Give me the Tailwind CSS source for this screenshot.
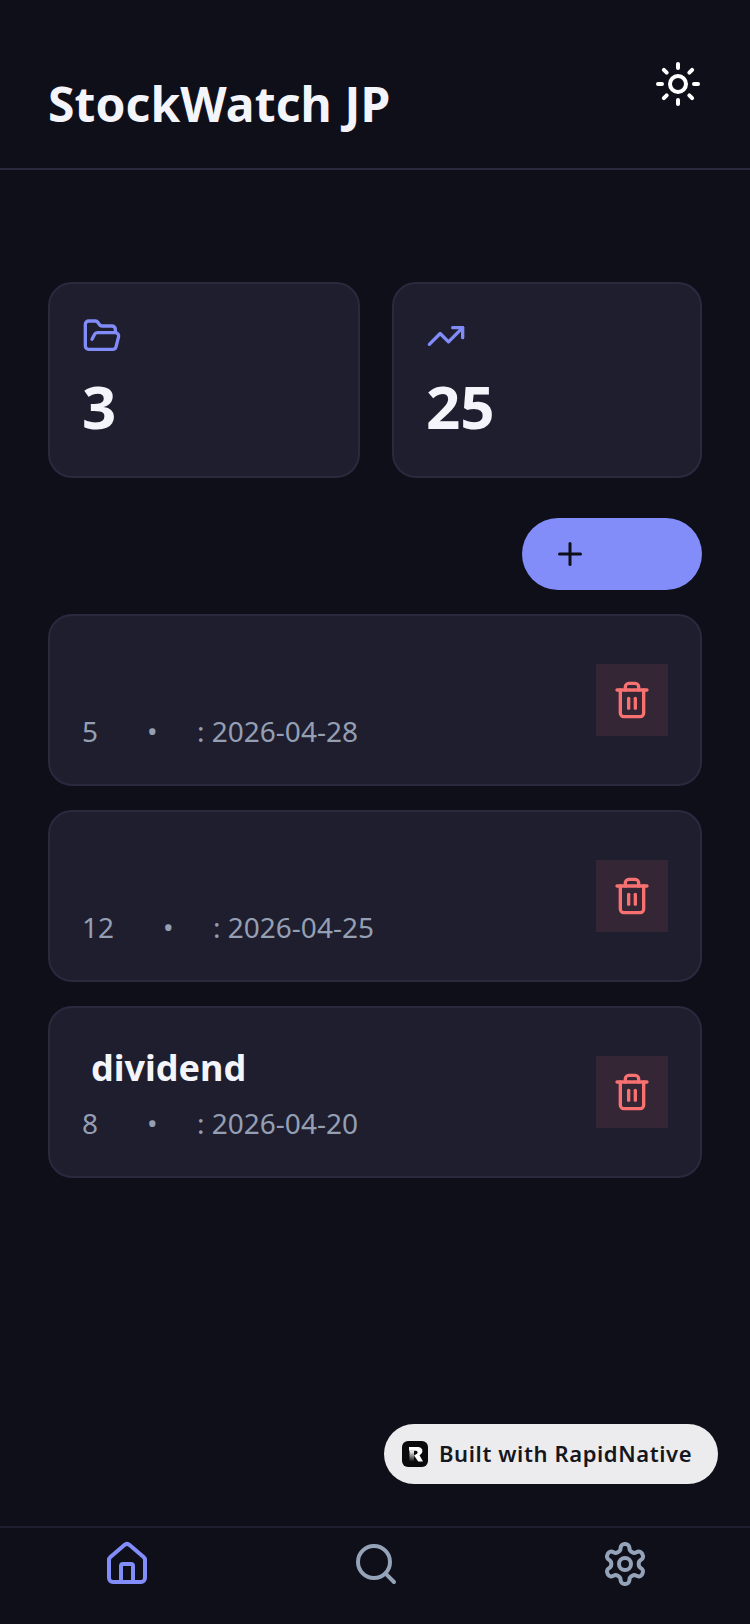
<!DOCTYPE html>
<html lang="en">
<head>
  <meta charset="UTF-8" />
  <meta name="viewport" content="width=device-width, initial-scale=1.0"/>
  <title>StockWatch JP</title>
  <script src="https://cdn.jsdelivr.net/npm/@tailwindcss/browser@4"></script>
</head>
<body class="bg-[#0f0f1a] font-['Noto_Sans',sans-serif]">
  <div class="relative flex flex-col h-[1624px] w-[750px] overflow-hidden">

    <!-- Header -->
    <header class="h-[170px] flex justify-between px-12 border-b-2 border-[#2a2a3e]">
      <h1 class="mt-[70px] text-[48px] leading-[68px] font-bold text-[#f4f5fb] tracking-[0.1px]">StockWatch JP</h1>
      <button class="mt-[60px] h-[48px] text-white" aria-label="Theme">
        <svg width="48" height="48" viewBox="0 0 24 24" fill="none" stroke="currentColor" stroke-width="2" stroke-linecap="round" stroke-linejoin="round"><circle cx="12" cy="12" r="4"/><path d="M12 2v2"/><path d="M12 20v2"/><path d="m4.93 4.93 1.41 1.41"/><path d="m17.66 17.66 1.41 1.41"/><path d="M2 12h2"/><path d="M20 12h2"/><path d="m6.34 17.66-1.41 1.41"/><path d="m19.07 4.93-1.41 1.41"/></svg>
      </button>
    </header>

    <main class="flex-1 px-12 pt-28">
      <!-- Stats -->
      <div class="grid grid-cols-[312px_310px] gap-8">
        <div class="h-[196px] rounded-3xl bg-[#1e1e2e] border-2 border-[#2a2a3e] px-8 pt-[32px]">
          <svg width="40" height="40" viewBox="0 0 24 24" fill="none" stroke="#818cf8" stroke-width="2" stroke-linecap="round" stroke-linejoin="round"><path d="m6 14 1.5-2.9A2 2 0 0 1 9.24 10H20a2 2 0 0 1 1.94 2.5l-1.54 6a2 2 0 0 1-1.95 1.5H4a2 2 0 0 1-2-2V5a2 2 0 0 1 2-2h3.9a2 2 0 0 1 1.69.9l.81 1.2a2 2 0 0 0 1.67.9H18a2 2 0 0 1 2 2v2"/></svg>
          <div class="text-[60px] leading-[76px] font-bold text-[#f4f5fb] mt-3">3</div>
        </div>
        <div class="h-[196px] rounded-3xl bg-[#1e1e2e] border-2 border-[#2a2a3e] px-8 pt-[32px]">
          <svg width="40" height="40" viewBox="0 0 24 24" fill="none" stroke="#818cf8" stroke-width="2" stroke-linecap="round" stroke-linejoin="round"><path d="M16 7h6v6"/><path d="m22 7-8.5 8.5-5-5L2 17"/></svg>
          <div class="text-[60px] leading-[76px] font-bold text-[#f4f5fb] mt-3">25</div>
        </div>
      </div>

      <!-- Add button -->
      <div class="flex justify-end mt-10">
        <button class="w-[180px] h-[72px] rounded-full bg-[#838dfa] flex items-center pl-[30px] text-[#0f0f1a]" aria-label="Add">
          <svg width="36" height="36" viewBox="0 0 24 24" fill="none" stroke="currentColor" stroke-width="2" stroke-linecap="round" stroke-linejoin="round"><path d="M5 12h14"/><path d="M12 5v14"/></svg>
        </button>
      </div>

      <!-- List -->
      <div class="flex flex-col gap-6 mt-6">
        <div class="h-[172px] rounded-3xl bg-[#1e1e2e] border-2 border-[#2a2a3e] pl-8 pr-8 flex items-center justify-between">
          <div class="pt-[12px]">
            <div class="h-[50px]"></div>
            <p class="text-[28px] leading-[40px] text-[#959fb3] flex"><span class="w-[65px]">5</span><span class="w-[50px]">•</span><span>: 2026-04-28</span></p>
          </div>
          <button class="w-[72px] h-[72px] bg-[#342635] flex items-center justify-center text-[#f87171]" aria-label="Delete">
            <svg width="40" height="40" viewBox="0 0 24 24" fill="none" stroke="currentColor" stroke-width="2" stroke-linecap="round" stroke-linejoin="round"><path d="M3 6h18"/><path d="M19 6v14c0 1-1 2-2 2H7c-1 0-2-1-2-2V6"/><path d="M8 6V4c0-1 1-2 2-2h4c1 0 2 1 2 2v2"/><line x1="10" x2="10" y1="11" y2="17"/><line x1="14" x2="14" y1="11" y2="17"/></svg>
          </button>
        </div>
        <div class="h-[172px] rounded-3xl bg-[#1e1e2e] border-2 border-[#2a2a3e] pl-8 pr-8 flex items-center justify-between">
          <div class="pt-[12px]">
            <div class="h-[50px]"></div>
            <p class="text-[28px] leading-[40px] text-[#959fb3] flex"><span class="w-[81px]">12</span><span class="w-[50px]">•</span><span>: 2026-04-25</span></p>
          </div>
          <button class="w-[72px] h-[72px] bg-[#342635] flex items-center justify-center text-[#f87171]" aria-label="Delete">
            <svg width="40" height="40" viewBox="0 0 24 24" fill="none" stroke="currentColor" stroke-width="2" stroke-linecap="round" stroke-linejoin="round"><path d="M3 6h18"/><path d="M19 6v14c0 1-1 2-2 2H7c-1 0-2-1-2-2V6"/><path d="M8 6V4c0-1 1-2 2-2h4c1 0 2 1 2 2v2"/><line x1="10" x2="10" y1="11" y2="17"/><line x1="14" x2="14" y1="11" y2="17"/></svg>
          </button>
        </div>
        <div class="h-[172px] rounded-3xl bg-[#1e1e2e] border-2 border-[#2a2a3e] pl-8 pr-8 flex items-center justify-between">
          <div class="pt-[12px]">
            <div class="mb-[20px] pl-[9px] text-[36px] leading-[30px] font-bold text-[#f4f5fb]">dividend</div>
            <p class="text-[28px] leading-[40px] text-[#959fb3] flex"><span class="w-[65px]">8</span><span class="w-[50px]">•</span><span>: 2026-04-20</span></p>
          </div>
          <button class="w-[72px] h-[72px] bg-[#342635] flex items-center justify-center text-[#f87171]" aria-label="Delete">
            <svg width="40" height="40" viewBox="0 0 24 24" fill="none" stroke="currentColor" stroke-width="2" stroke-linecap="round" stroke-linejoin="round"><path d="M3 6h18"/><path d="M19 6v14c0 1-1 2-2 2H7c-1 0-2-1-2-2V6"/><path d="M8 6V4c0-1 1-2 2-2h4c1 0 2 1 2 2v2"/><line x1="10" x2="10" y1="11" y2="17"/><line x1="14" x2="14" y1="11" y2="17"/></svg>
          </button>
        </div>
      </div>
    </main>

    <!-- Badge -->
    <div class="absolute left-[384px] top-[1424px] w-[334px] h-[60px] rounded-full bg-[#ececee] flex items-center pl-[18px] gap-[11px]">
      <svg width="26" height="26" viewBox="0 0 26 26">
        <defs><linearGradient id="stem" x1="0" y1="0" x2="0" y2="1"><stop offset="0" stop-color="#fff"/><stop offset="1" stop-color="#0b0b0d"/></linearGradient></defs>
        <rect width="26" height="26" rx="6" fill="#0b0b0d"/>
        <path d="M7 6h9.500a4 4 0 0 1 2.600 7l-1.600 1.200L21 20.500h-4.800L12 14.500l3-1.800a1.700 1.700 0 0 0-.8-3H7z" fill="#fff"/>
        <rect x="7.500" y="9.700" width="4.500" height="11" fill="url(#stem)"/>
      </svg>
      <span class="text-[22px] font-semibold text-[#16171c] tracking-[0.6px] -mt-[1px]">Built with RapidNative</span>
    </div>

    <!-- Bottom nav -->
    <nav class="h-[98px] border-t-2 border-[#1e1e2e] flex justify-around items-start pt-[12px] pl-[2px]">
      <svg width="48" height="48" viewBox="0 0 24 24" fill="none" stroke="#838dfa" stroke-width="2" stroke-linecap="round" stroke-linejoin="round"><path d="M15 21v-8a1 1 0 0 0-1-1h-4a1 1 0 0 0-1 1v8"/><path d="M3 10a2 2 0 0 1 .709-1.528l7-5.999a2 2 0 0 1 2.582 0l7 5.999A2 2 0 0 1 21 10v9a2 2 0 0 1-2 2H5a2 2 0 0 1-2-2z"/></svg>
      <svg width="48" height="48" viewBox="0 0 24 24" fill="none" stroke="#94a3b8" stroke-width="2" stroke-linecap="round" stroke-linejoin="round"><path d="m21 21-4.300-4.300"/><circle cx="11" cy="11" r="8"/></svg>
      <svg width="48" height="48" viewBox="0 0 24 24" fill="none" stroke="#94a3b8" stroke-width="2" stroke-linecap="round" stroke-linejoin="round"><path d="M12.22 2h-.44a2 2 0 0 0-2 2v.18a2 2 0 0 1-1 1.73l-.43.25a2 2 0 0 1-2 0l-.15-.08a2 2 0 0 0-2.73.73l-.22.38a2 2 0 0 0 .73 2.73l.15.1a2 2 0 0 1 1 1.72v.51a2 2 0 0 1-1 1.74l-.15.09a2 2 0 0 0-.73 2.73l.22.38a2 2 0 0 0 2.73.73l.15-.08a2 2 0 0 1 2 0l.43.25a2 2 0 0 1 1 1.73V20a2 2 0 0 0 2 2h.44a2 2 0 0 0 2-2v-.18a2 2 0 0 1 1-1.73l.43-.25a2 2 0 0 1 2 0l.15.08a2 2 0 0 0 2.73-.73l.22-.39a2 2 0 0 0-.73-2.73l-.15-.08a2 2 0 0 1-1-1.74v-.5a2 2 0 0 1 1-1.74l.15-.09a2 2 0 0 0 .73-2.73l-.22-.38a2 2 0 0 0-2.73-.73l-.15.08a2 2 0 0 1-2 0l-.43-.25a2 2 0 0 1-1-1.73V4a2 2 0 0 0-2-2z"/><circle cx="12" cy="12" r="3"/></svg>
    </nav>
  </div>
</body>
</html>
